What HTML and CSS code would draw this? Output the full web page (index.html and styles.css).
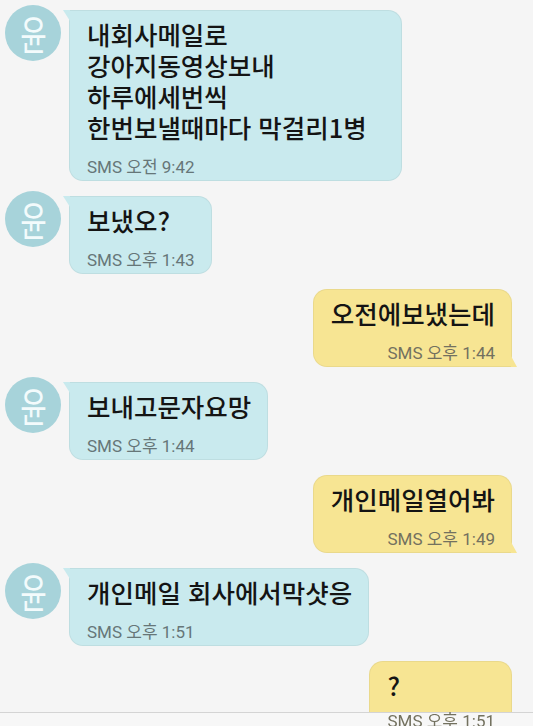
FILE: index.html
```html
<!DOCTYPE html>
<html lang="ko">
<head>
<meta charset="utf-8">
<title>SMS</title>
<link rel="stylesheet" href="styles.css">
</head>
<body>
<div class="chat">
  <div class="row in">
    <div class="avatar"><span class="initial">윤</span></div>
    <div class="bubble in wide">
      <div class="msg">내회사메일로<br>강아지동영상보내<br>하루에세번씩<br>한번보낼때마다 막걸리1병</div>
      <div class="time">SMS 오전 9:42</div>
    </div>
  </div>
  <div class="row in">
    <div class="avatar"><span class="initial">윤</span></div>
    <div class="bubble in">
      <div class="msg">보냈오?</div>
      <div class="time">SMS 오후 1:43</div>
    </div>
  </div>
  <div class="row out">
    <div class="bubble out">
      <div class="msg">오전에보냈는데</div>
      <div class="time">SMS 오후 1:44</div>
    </div>
  </div>
  <div class="row in">
    <div class="avatar"><span class="initial">윤</span></div>
    <div class="bubble in">
      <div class="msg">보내고문자요망</div>
      <div class="time">SMS 오후 1:44</div>
    </div>
  </div>
  <div class="row out">
    <div class="bubble out">
      <div class="msg">개인메일열어봐</div>
      <div class="time">SMS 오후 1:49</div>
    </div>
  </div>
  <div class="row in">
    <div class="avatar"><span class="initial">윤</span></div>
    <div class="bubble in">
      <div class="msg">개인메일 회사에서막샷응</div>
      <div class="time">SMS 오후 1:51</div>
    </div>
  </div>
  <div class="row out">
    <div class="bubble out">
      <div class="msg">?</div>
      <div class="time peek">SMS 오후 1:51</div>
    </div>
  </div>
</div>
<div class="navbar"></div>
</body>
</html>
```
FILE: styles.css
```css
html, body {
  margin: 0;
  padding: 0;
}
body {
  background: #f5f5f5;
  height: 726px;
  overflow: hidden;
  font-family: "Noto Sans CJK KR", "Noto Sans", sans-serif;
}
.chat {
  display: flex;
  flex-direction: column;
  gap: 15px;
  padding: 10px 21px 0 5px;
}
.row {
  display: flex;
  align-items: flex-start;
}
.row.out {
  justify-content: flex-end;
}
.avatar {
  flex: none;
  width: 56px;
  height: 56px;
  margin-top: -5px;
  margin-right: 8px;
  border-radius: 50%;
  background: #a7d3da;
  color: #f3fbfc;
  display: flex;
  align-items: center;
  justify-content: center;
}
.initial {
  display: block;
  font-size: 40px;
  line-height: 1;
  font-weight: 400;
  transform: scaleX(0.72);
}
.bubble {
  position: relative;
  padding: 7px 16px 3px 17px;
  border-radius: 14px;
  border: 1px solid rgba(0, 0, 0, 0.05);
}
.bubble.wide {
  padding-right: 34px;
}
.bubble.in {
  background: #c9eaee;
  border-top-left-radius: 0;
}
.bubble.in::before {
  content: "";
  position: absolute;
  left: -7px;
  top: -1px;
  width: 7px;
  height: 11px;
  background: #c9eaee;
  clip-path: polygon(0 0, 100% 0, 100% 100%);
}
.bubble.out {
  background: #f7e593;
  border-bottom-right-radius: 0;
}
.bubble.out::after {
  content: "";
  position: absolute;
  right: -6px;
  bottom: -1px;
  width: 6px;
  height: 11px;
  background: #f7e593;
  clip-path: polygon(0 0, 100% 100%, 0 100%);
}
.msg {
  font-size: 25.5px;
  font-weight: 500;
  line-height: 31px;
  color: #141414;
}
.time {
  margin-top: 15px;
  font-family: Roboto, "Noto Sans CJK KR", sans-serif;
  font-size: 17px;
  line-height: 20px;
  color: #667678;
}
.bubble.out .time {
  text-align: right;
  color: #73715f;
}
.time.peek {
  position: relative;
  z-index: 2;
  top: -4px;
}
.navbar {
  position: fixed;
  left: 0;
  right: 0;
  bottom: 0;
  height: 13px;
  background: #f7f7f7;
  border-top: 1px solid #d4d4d4;
  z-index: 1;
}
```
